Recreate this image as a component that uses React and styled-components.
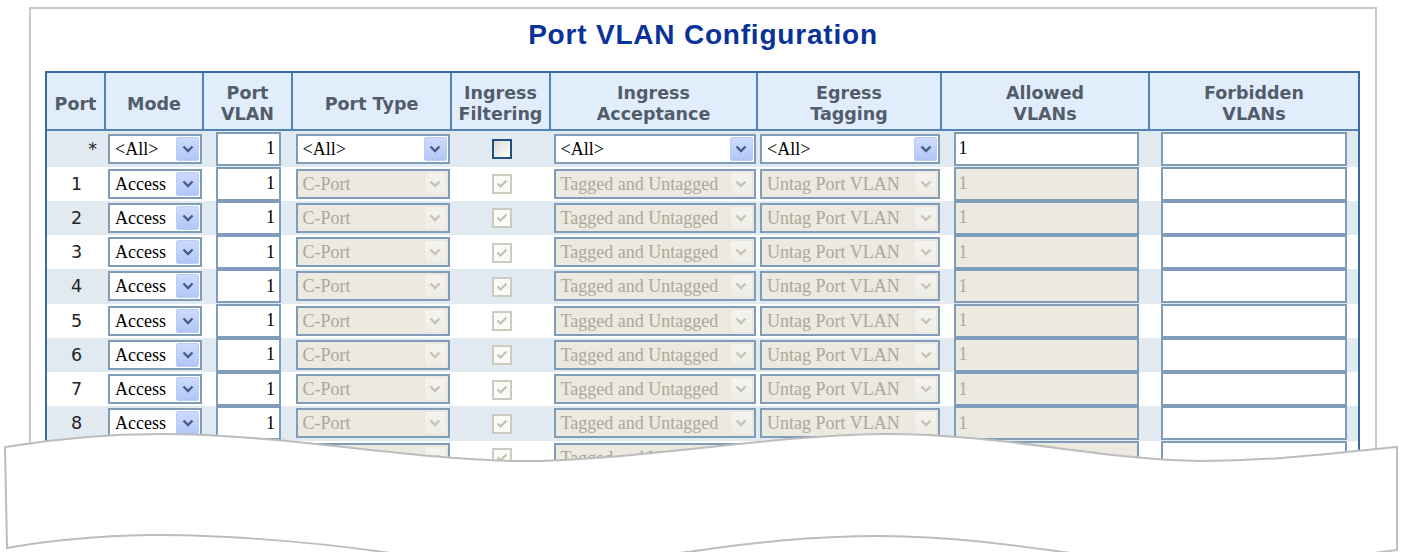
import React from 'react';
import styled, { createGlobalStyle } from 'styled-components';

const GlobalStyle = createGlobalStyle`
  html, body { margin: 0; padding: 0; background: #fff; overflow: hidden; }
  * { box-sizing: border-box; }
`;

const Page = styled.div`
  position: relative;
  width: 1402px;
  height: 552px;
  overflow: hidden;
  padding: 7px 25px 0 29px;
  background: #fff;
`;

const Frame = styled.section`
  width: 1348px;
  height: 490px;
  overflow: hidden;
  border: 2px solid #c8c8c8;
  border-bottom: none;
`;

const Title = styled.h1`
  margin: 11px 0 21px;
  height: 30px;
  line-height: 30px;
  text-align: center;
  font-family: "Liberation Sans", Arial, sans-serif;
  font-weight: bold;
  font-size: 28px;
  letter-spacing: 0.8px;
  color: #0a3399;
`;

const Grid = styled.table`
  margin-left: 14px;
  width: 1315px;
  border: 2px solid #3a6aa2;
  border-collapse: separate;
  border-spacing: 0;
  table-layout: fixed;
`;

const HeadRow = styled.tr`
  height: 58px;
`;

const HeadCell = styled.th`
  padding: 6px 0 0;
  background: #e2edfb;
  border-right: 2px solid #5383b8;
  border-bottom: 2px solid #5383b8;
  font-family: "DejaVu Sans", Verdana, sans-serif;
  font-weight: bold;
  font-size: 17.5px;
  line-height: 21px;
  color: #525d6b;
  text-align: center;
  vertical-align: middle;
  &:last-child { border-right: none; }
`;

const Row = styled.tr`
  height: ${p => p.$h}px;
  background: ${p => (p.$striped ? '#e1e9f1' : '#ffffff')};
`;

const Cell = styled.td`
  padding: 0 ${p => (p.$padRight ? p.$padRight : 0)}px 0 0;
  text-align: ${p => p.$align || 'center'};
  vertical-align: middle;
  font-family: "DejaVu Sans", Verdana, sans-serif;
  font-size: 17.5px;
  color: #222;
`;

const SelectBox = styled.div`
  display: flex;
  align-items: center;
  width: ${p => p.$w}px;
  height: 30px;
  margin: 0 auto;
  padding: 1px;
  border: 2px solid #7f9db9;
  background: ${p => (p.$disabled ? '#ebe9e0' : '#fff')};
`;

const SelectText = styled.span`
  flex: 1;
  min-width: 0;
  padding-left: 4px;
  text-align: left;
  white-space: nowrap;
  overflow: hidden;
  font-family: "Liberation Serif", "Times New Roman", serif;
  font-size: 18px;
  line-height: 24px;
  color: ${p => (p.$disabled ? '#aca899' : '#000')};
`;

const DropButton = styled.span`
  flex: none;
  display: flex;
  align-items: center;
  justify-content: center;
  width: 23px;
  height: 24px;
  border-radius: 2px;
  border: 1px solid ${p => (p.$disabled ? '#e8e6de' : '#b9cdf8')};
  background: ${p =>
    p.$disabled
      ? 'linear-gradient(#f4f3ee, #eeede6)'
      : 'linear-gradient(#cddbfd, #b2c6f6)'};
`;

const TextField = styled.input`
  display: block;
  width: ${p => p.$w}px;
  height: 34px;
  margin: 0 auto;
  padding: 0 4px 0 3px;
  border: 2px solid #7f9db9;
  background: #fff;
  font-family: "Liberation Serif", "Times New Roman", serif;
  font-size: 18px;
  color: #000;
  text-align: ${p => p.$align || 'left'};
  outline: none;
  &:disabled {
    background: #ebe9e0;
    color: #aca899;
    -webkit-text-fill-color: #aca899;
    opacity: 1;
  }
`;

const CheckBox = styled.span`
  display: inline-flex;
  align-items: center;
  justify-content: center;
  width: 20px;
  height: 20px;
  vertical-align: middle;
  border: 2px solid ${p => (p.$disabled ? '#cdcbc0' : '#1f5283')};
  background: ${p =>
    p.$disabled ? '#fafaf7' : 'linear-gradient(135deg, #d9d9d3, #ffffff)'};
`;

const TornSheet = styled.svg`
  position: absolute;
  left: 0;
  top: 420px;
  width: 1402px;
  height: 140px;
`;

const Chevron = ({ disabled }) => (
  <svg width="12" height="8" viewBox="0 0 12 8">
    <polyline
      points="1.5,1.5 6,6 10.5,1.5"
      fill="none"
      stroke={disabled ? '#c6c4b7' : '#4a5d8a'}
      strokeWidth="2.4"
    />
  </svg>
);

const Select = ({ value, width, disabled }) => (
  <SelectBox $w={width} $disabled={disabled}>
    <SelectText $disabled={disabled}>{value}</SelectText>
    <DropButton $disabled={disabled}>
      <Chevron disabled={disabled} />
    </DropButton>
  </SelectBox>
);

const Check = ({ checked, disabled }) => (
  <CheckBox $disabled={disabled}>
    {checked && (
      <svg width="12" height="10" viewBox="0 0 12 10">
        <polyline
          points="1.5,4.5 4.5,7.5 10.5,1.5"
          fill="none"
          stroke="#c3c1b3"
          strokeWidth="2.2"
        />
      </svg>
    )}
  </CheckBox>
);

const colWidths = [59, 98, 89, 159, 99, 207, 184, 208, 208];

const headers = [
  ['Port'],
  ['Mode'],
  ['Port', 'VLAN'],
  ['Port Type'],
  ['Ingress', 'Filtering'],
  ['Ingress', 'Acceptance'],
  ['Egress', 'Tagging'],
  ['Allowed', 'VLANs'],
  ['Forbidden', 'VLANs'],
];

const ports = Array.from({ length: 9 }, (_, i) => i + 1);

export default function App() {
  return (
    <>
      <GlobalStyle />
      <Page>
        <Frame>
          <Title>Port VLAN Configuration</Title>
          <Grid>
            <colgroup>
              {colWidths.map((w, i) => (
                <col key={i} style={{ width: w }} />
              ))}
            </colgroup>
            <thead>
              <HeadRow>
                {headers.map((lines, i) => (
                  <HeadCell key={i}>
                    {lines.map((l, j) => (
                      <React.Fragment key={j}>
                        {j > 0 && <br />}
                        {l}
                      </React.Fragment>
                    ))}
                  </HeadCell>
                ))}
              </HeadRow>
            </thead>
            <tbody>
              <Row $h={35.5} $striped>
                <Cell $align="right" $padRight={9}>*</Cell>
                <Cell><Select value="<All>" width={94} /></Cell>
                <Cell><TextField $w={65} $align="right" defaultValue="1" /></Cell>
                <Cell><Select value="<All>" width={154} /></Cell>
                <Cell><Check /></Cell>
                <Cell><Select value="<All>" width={202} /></Cell>
                <Cell><Select value="<All>" width={180} /></Cell>
                <Cell><TextField $w={185} defaultValue="1" /></Cell>
                <Cell><TextField $w={186} defaultValue="" /></Cell>
              </Row>
              {ports.map(p => (
                <Row key={p} $h={34.25} $striped={p % 2 === 0}>
                  <Cell>{p}</Cell>
                  <Cell><Select value="Access" width={94} /></Cell>
                  <Cell><TextField $w={65} $align="right" defaultValue="1" /></Cell>
                  <Cell><Select value="C-Port" width={154} disabled /></Cell>
                  <Cell><Check checked disabled /></Cell>
                  <Cell><Select value="Tagged and Untagged" width={202} disabled /></Cell>
                  <Cell><Select value="Untag Port VLAN" width={180} disabled /></Cell>
                  <Cell><TextField $w={185} defaultValue="1" disabled /></Cell>
                  <Cell><TextField $w={186} defaultValue="" /></Cell>
                </Row>
              ))}
            </tbody>
          </Grid>
        </Frame>
        <TornSheet viewBox="0 420 1402 140" aria-hidden="true">
          <path
            d="M5,447 C60,438 110,434 160,434 C280,434 400,458 510,461 C620,463 760,436 880,434 C1000,433 1100,460 1200,461 C1280,461 1340,452 1397,447 L1397,550 C1250,570 1120,560 1063,552 C1000,543 950,537 880,536 C800,536 740,545 687,552 C600,565 450,562 383,552 C300,540 200,534 150,535 C90,536 40,542 7,548 Z"
            fill="#ffffff"
            stroke="#bdbdbd"
            strokeWidth="2"
          />
        </TornSheet>
      </Page>
    </>
  );
}
